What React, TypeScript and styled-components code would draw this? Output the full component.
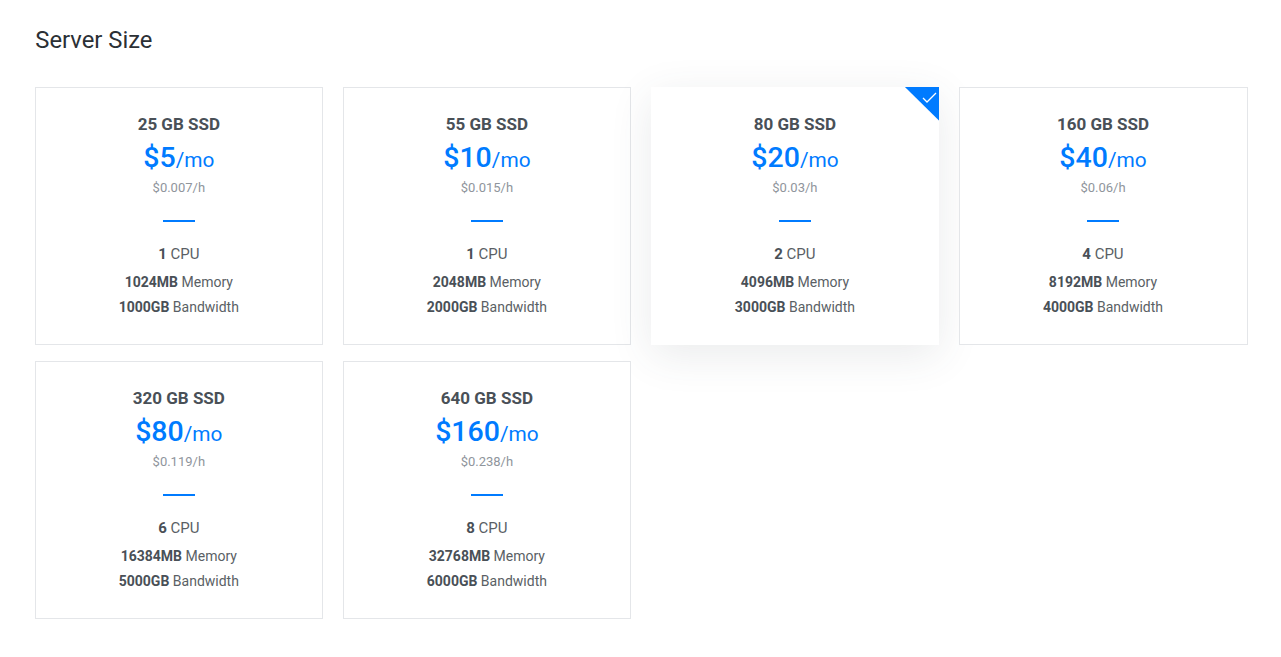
import React from 'react';
import styled, { createGlobalStyle } from 'styled-components';

const GlobalStyle = createGlobalStyle`
  html, body {
    margin: 0;
    padding: 0;
    background: #fff;
    font-family: Roboto, "Liberation Sans", sans-serif;
  }
`;

const Page = styled.div`
  padding: 25px 33.5px 0 35.3px;
`;

const Title = styled.h2`
  margin: 0 0 32px;
  font-size: 23.8px;
  line-height: 30px;
  font-weight: 400;
  color: #2b3035;
`;

const Grid = styled.div`
  display: grid;
  grid-template-columns: repeat(4, 1fr);
  column-gap: 20px;
  row-gap: 16px;
`;

const Card = styled.div<{ $selected?: boolean }>`
  position: relative;
  box-sizing: border-box;
  height: 258px;
  padding: 27px 1px 0 0;
  display: flex;
  flex-direction: column;
  align-items: center;
  background: #fff;
  border: 1px solid ${({ $selected }) => ($selected ? 'transparent' : '#e4e6e9')};
  box-shadow: ${({ $selected }) => ($selected ? '0 10px 40px rgba(60, 70, 80, 0.11)' : 'none')};
`;

const Ribbon = styled.div`
  position: absolute;
  top: -1px;
  right: -1px;
  width: 34.5px;
  height: 34px;
  background: #007bff;
  clip-path: polygon(0 0, 100% 0, 100% 100%);
`;

const Check = styled.svg`
  position: absolute;
  top: 4px;
  right: 2px;
  width: 15px;
  height: 13px;
`;

const Size = styled.div`
  font-size: 17px;
  line-height: 19px;
  font-weight: 700;
  color: #495057;
`;

const Price = styled.div`
  margin-top: 7px;
  font-size: 20.8px;
  line-height: 34px;
  color: #007bff;
`;

const Amount = styled.span`
  font-size: 28.5px;
  font-weight: 500;
`;

const Hourly = styled.div`
  margin-top: 1px;
  font-size: 13px;
  line-height: 20px;
  color: #8f959c;
`;

const Divider = styled.div`
  margin-top: 22px;
  width: 32px;
  height: 2px;
  background: #007bff;
`;

const Cpu = styled.div`
  margin-top: 22px;
  font-size: 15px;
  line-height: 20px;
  color: #5a5f65;
`;

const Spec = styled.div<{ $gap: number }>`
  margin-top: ${({ $gap }) => $gap}px;
  font-size: 14px;
  line-height: 20px;
  color: #5a5f65;
`;

const Strong = styled.b`
  font-weight: 700;
  color: #495057;
`;

type Plan = {
  size: string;
  price: string;
  hourly: string;
  cpu: number;
  memory: string;
  bandwidth: string;
  selected?: boolean;
};

const plans: Plan[] = [
  { size: '25 GB SSD', price: '$5', hourly: '$0.007/h', cpu: 1, memory: '1024MB', bandwidth: '1000GB' },
  { size: '55 GB SSD', price: '$10', hourly: '$0.015/h', cpu: 1, memory: '2048MB', bandwidth: '2000GB' },
  { size: '80 GB SSD', price: '$20', hourly: '$0.03/h', cpu: 2, memory: '4096MB', bandwidth: '3000GB', selected: true },
  { size: '160 GB SSD', price: '$40', hourly: '$0.06/h', cpu: 4, memory: '8192MB', bandwidth: '4000GB' },
  { size: '320 GB SSD', price: '$80', hourly: '$0.119/h', cpu: 6, memory: '16384MB', bandwidth: '5000GB' },
  { size: '640 GB SSD', price: '$160', hourly: '$0.238/h', cpu: 8, memory: '32768MB', bandwidth: '6000GB' },
];

function App() {
  return (
    <Page>
      <GlobalStyle />
      <Title>Server Size</Title>
      <Grid>
        {plans.map((plan) => (
          <Card key={plan.size} $selected={plan.selected}>
            {plan.selected && (
              <Ribbon>
                <Check viewBox="0 0 15 13" fill="none" stroke="#fff" strokeWidth="1.3">
                  <path d="M1 7l4 4 9-9" />
                </Check>
              </Ribbon>
            )}
            <Size>{plan.size}</Size>
            <Price>
              <Amount>{plan.price}</Amount>/mo
            </Price>
            <Hourly>{plan.hourly}</Hourly>
            <Divider />
            <Cpu>
              <Strong>{plan.cpu}</Strong> CPU
            </Cpu>
            <Spec $gap={8}>
              <Strong>{plan.memory}</Strong> Memory
            </Spec>
            <Spec $gap={5}>
              <Strong>{plan.bandwidth}</Strong> Bandwidth
            </Spec>
          </Card>
        ))}
      </Grid>
    </Page>
  );
}

export default App;
